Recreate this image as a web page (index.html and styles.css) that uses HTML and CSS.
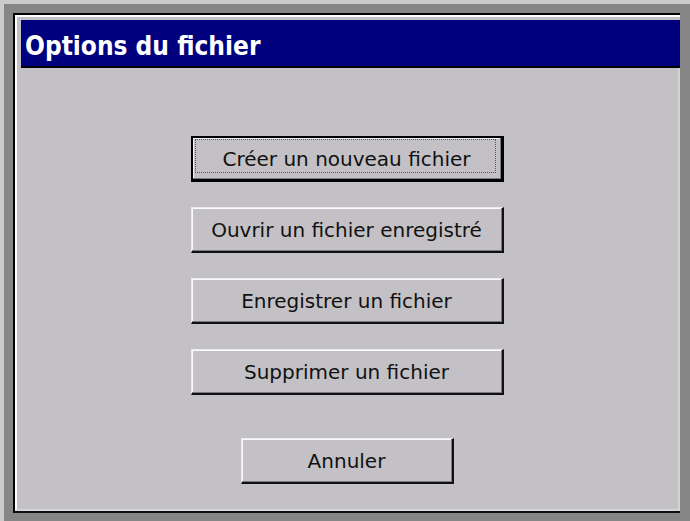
FILE: index.html
```html
<!DOCTYPE html>
<html lang="fr">
<head>
<meta charset="utf-8">
<title>Options du fichier</title>
<link rel="stylesheet" href="styles.css">
</head>
<body>
<div class="screen">
  <div class="dialog">
    <div class="dialog-inner">
      <div class="titlebar">Options du fichier</div>
      <div class="content">
        <div class="btn-list">
          <button class="btn btn-default">Créer un nouveau fichier</button>
          <button class="btn">Ouvrir un fichier enregistré</button>
          <button class="btn">Enregistrer un fichier</button>
          <button class="btn">Supprimer un fichier</button>
        </div>
        <button class="btn btn-cancel">Annuler</button>
      </div>
    </div>
  </div>
</div>
</body>
</html>
```
FILE: styles.css
```css
html, body {
  margin: 0;
  padding: 0;
}
body {
  width: 690px;
  height: 521px;
  overflow: hidden;
  background: #868686;
  font-family: "DejaVu Sans Condensed", "Liberation Sans", sans-serif;
}
.screen {
  box-sizing: border-box;
  width: 690px;
  height: 521px;
  background: #868686;
  border-top: 4px solid #cbcbcb;
  border-left: 4px solid #cbcbcb;
  padding: 9px 10px 8px 9px;
  display: flex;
}
.dialog {
  flex: 1;
  display: flex;
  border-top: 2px solid #000;
  border-left: 2px solid #000;
  border-bottom: 2px solid #111;
}
.dialog-inner {
  flex: 1;
  display: flex;
  flex-direction: column;
  background: #c3c1c5;
  border-top: 2px solid #fff;
  border-left: 2px solid #fff;
  border-bottom: 2px solid #d6d6d6;
  padding-top: 3px;
}
.titlebar {
  margin-left: 4px;
  height: 46px;
  border-bottom: 2px solid #000;
  background: #00007f;
  color: #fff;
  font-weight: bold;
  font-size: 26px;
  line-height: 52px;
  padding-left: 4px;
  white-space: nowrap;
}
.content {
  flex: 1;
  display: flex;
  flex-direction: column;
  align-items: center;
  padding: 68px 3px 0 0;
  box-shadow: inset -2px 0 #d4d4d4;
}
.btn-list {
  display: flex;
  flex-direction: column;
  gap: 25px;
}
.btn {
  position: relative;
  box-sizing: border-box;
  width: 313px;
  height: 46px;
  margin: 0;
  padding: 1px 0 0 0;
  background: #c3c1c5;
  color: #111;
  font-family: "DejaVu Sans", "Liberation Sans", sans-serif;
  font-size: 20px;
  border-style: solid;
  border-width: 1px 2px 2px 1px;
  border-color: #ebebeb #101010 #101010 #ebebeb;
  box-shadow: inset -1px -1px #7c7c7c, inset 1px 1px #fafafa;
  cursor: default;
}
.btn-default {
  border-width: 2px 3px 3px 2px;
  border-color: #000;
  box-shadow: inset -1px -1px #7c7c7c, inset 1px 1px #f4f4f4;
}
.btn-default::after {
  content: "";
  position: absolute;
  left: 2px;
  right: 5px;
  top: 1px;
  bottom: 6px;
  border: 1px dotted #555;
}
.btn-cancel {
  width: 213px;
  margin-top: 43px;
}
```
